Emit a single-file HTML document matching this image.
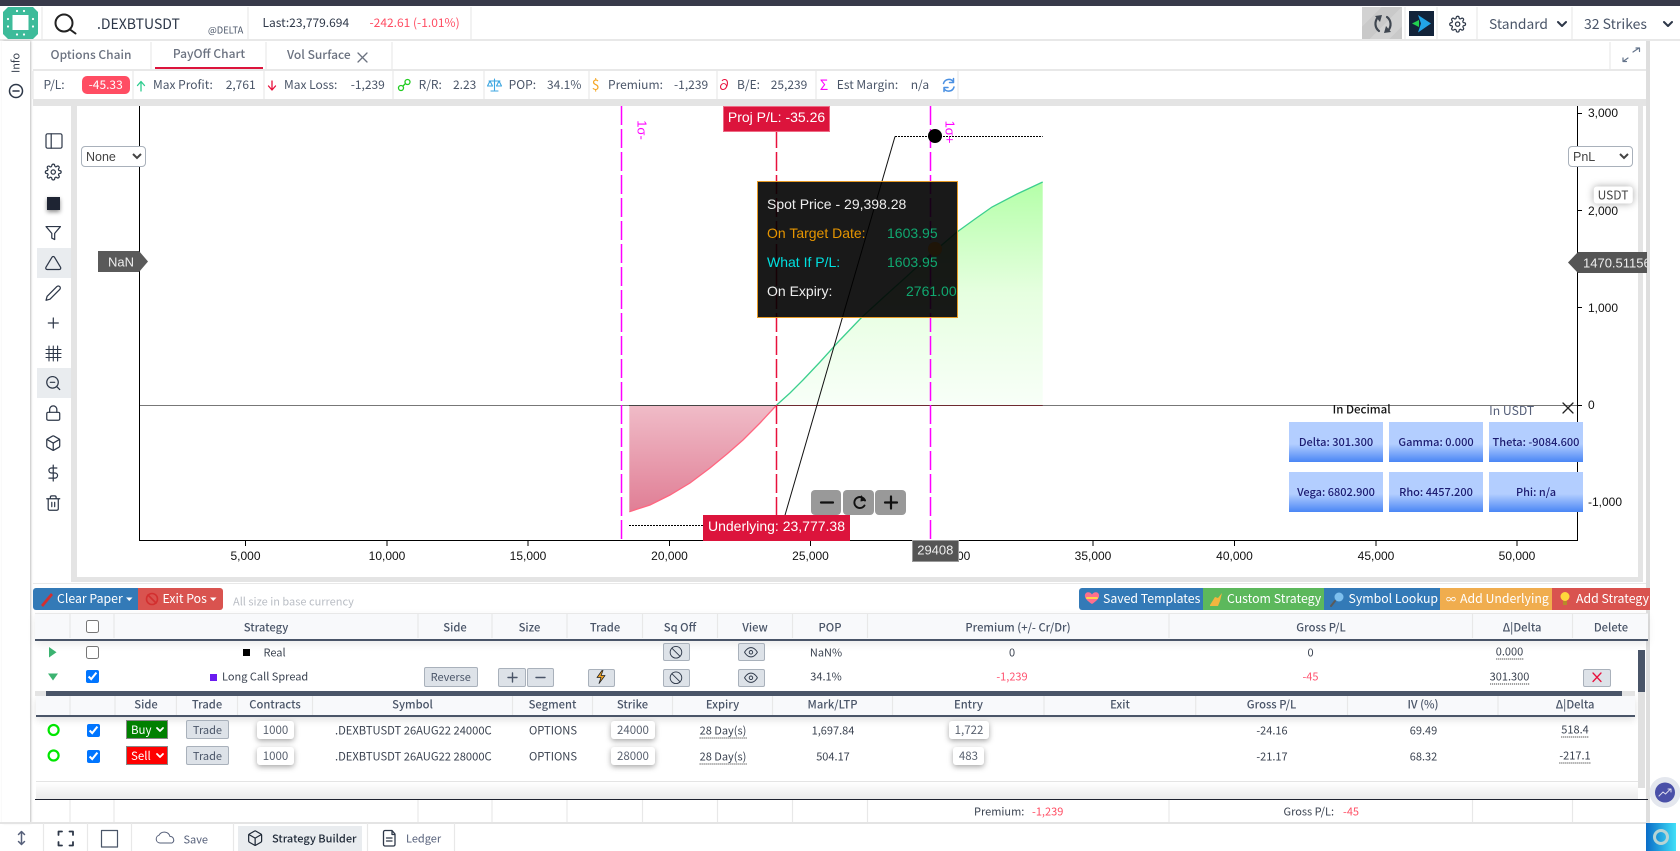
<!DOCTYPE html>
<html lang="en"><head><meta charset="utf-8"><title>PayOff Chart</title>
<style>
html,body{margin:0;padding:0;width:1680px;height:851px;overflow:hidden;background:#fff}
body{position:relative;font-family:"Noto Sans CJK JP","Liberation Sans",sans-serif;font-size:11px;color:#3a4250}
.a{position:absolute}
.x,.c{position:absolute;white-space:nowrap;line-height:1}
.x{transform:translateY(-50%)}
.c{transform:translate(-50%,-50%)}
.lib{font-family:"Liberation Sans",sans-serif}
svg.full{position:absolute;left:0;top:0;width:1680px;height:851px;pointer-events:none}
.th{font-weight:500;color:#4a5568;font-size:11.2px}
.st{font-size:12px;color:#4a5568}
.btn{position:absolute;background:#dde2e8;border:1px solid #a9b1bb;border-radius:2px;box-sizing:border-box;color:#4a5568}
.inp{position:absolute;background:#fff;border-radius:3px;box-shadow:0 2px 6px rgba(0,0,0,.35);text-align:center;color:#5a6270;font-size:11.5px;line-height:18px}
.dot{border-bottom:1px dotted #222;line-height:14px!important}
.gr{position:absolute;width:94px;height:40px;background:linear-gradient(#b3ceff 0%,#b3ceff 55%,#4a86f5 100%);color:#1c1c72;font-size:11px;font-weight:500;text-align:center;line-height:40px;white-space:nowrap}
select.sel{position:absolute;background:#fff;border:1px solid #a9b1bb;border-radius:4px;font:12.5px "Liberation Sans",sans-serif;color:#444;padding:0;margin:0}
.bs{position:absolute;left:126px;width:42px;height:19px;box-sizing:border-box;border:1px solid #888;color:#fff;font-size:11.5px;line-height:18px;padding-left:4px}
input[type=checkbox]{position:absolute;margin:0;width:13px;height:13px}
</style></head><body>

<!-- page backgrounds -->
<div class="a" style="left:0;top:0;width:1680px;height:6px;background:#383a4a"></div>
<div class="a" style="left:0;top:39px;width:1680px;height:2px;background:#e8e8e8"></div>
<div class="a" style="left:2px;top:41px;width:28px;height:782px;background:#fff;box-shadow:1px 0 2px rgba(0,0,0,.25)"></div>
<div class="a" style="left:1646px;top:41px;width:4px;height:781px;background:#dedede"></div>
<div class="a" style="left:33px;top:69px;width:1613px;height:2px;background:#e8e8e8"></div>
<div class="a" style="left:33px;top:99px;width:1613px;height:7px;background:#e4e4e4"></div>
<div class="a" style="left:71px;top:106px;width:6px;height:476px;background:#e4e4e4"></div>
<div class="a" style="left:1638px;top:106px;width:5px;height:476px;background:#e4e4e4"></div>
<div class="a" style="left:71px;top:577px;width:1572px;height:5px;background:#e4e4e4"></div>
<div class="a" style="left:33px;top:583px;width:1613px;height:1px;background:#e8e8e8"></div>
<div class="a" style="left:1362px;top:7px;width:40px;height:32px;background:repeating-linear-gradient(135deg,#d2d2d2 0 14px,#c9c9c9 14px 28px)"></div>
<div class="a" style="left:37px;top:248px;width:34px;height:30px;background:#e9ecef"></div>
<div class="a" style="left:37px;top:368px;width:34px;height:30px;background:#e9ecef"></div>
<div class="a" style="left:155px;top:67px;width:108px;height:2px;background:#dc143c"></div>
<!-- table header backgrounds -->
<div class="a" style="left:35px;top:613px;width:1613px;height:25px;background:#f8f9fb;border-top:1px solid #e8e8e8;border-bottom:2px solid #4a5568;box-shadow:0 3px 8px rgba(0,0,0,.08)"></div>
<div class="a" style="left:36px;top:696px;width:1599px;height:19px;background:#f8f9fb;border-bottom:2px solid #4a5568;box-shadow:0 3px 8px rgba(0,0,0,.12)"></div>
<div class="a" style="left:35px;top:691px;width:1600px;height:5px;background:#e4e4e4"></div>
<div class="a" style="left:46px;top:691px;width:1576px;height:5px;background:#4a5568"></div>
<div class="a" style="left:36px;top:781px;width:1602px;height:18px;background:linear-gradient(#fff,#eaeaea);border-top:1px solid #e4e4e4"></div>
<div class="a" style="left:35px;top:799px;width:1613px;height:1px;background:#1f2330"></div>
<div class="a" style="left:0;top:822px;width:1650px;height:1.5px;background:#e4e4e4"></div>
<div class="a" style="left:1638px;top:650px;width:7px;height:138px;background:#e0e0e0"></div>
<div class="a" style="left:1638px;top:650px;width:7px;height:42px;background:#4a5568"></div>
<div class="a" style="left:238px;top:826px;width:124px;height:25px;background:#e9ecef"></div>
<div class="a" style="left:1646px;top:823px;width:30px;height:28px;background:linear-gradient(90deg,#0a6cc8,#40e0f8)"></div>

<!-- chart + grid lines -->
<svg class="full" viewBox="0 0 1680 851">
<defs>
<linearGradient id="gg" gradientUnits="userSpaceOnUse" x1="0" y1="182" x2="0" y2="405"><stop offset="0" stop-color="#b4ffa8"/><stop offset=".5" stop-color="#e6ffe0"/><stop offset="1" stop-color="#f8fff8"/></linearGradient>
<linearGradient id="rg" gradientUnits="userSpaceOnUse" x1="0" y1="405" x2="0" y2="512"><stop offset="0" stop-color="#f0bcc8"/><stop offset="1" stop-color="#e07e95"/></linearGradient>
</defs>
<!-- cell dividers -->
<g stroke="#e8e8e8" stroke-width="1.2">
<path d="M42 7V39M248 7V39M471 7V39M1405 7V39M1437 7V39M1477 7V39M1572 7V39"/>
<path d="M151 42V69M266 42V69M392 42V69M1610 42V69"/>
<path d="M33 71V99M133 71V99M264 71V99M393 71V99M484 71V99M589 71V99M717 71V99M816 71V99M958 71V99"/>
<path d="M70 613V638M114 613V638M418 613V638M492 613V638M567 613V638M642.5 613V638M717.5 613V638M792.5 613V638M867.5 613V638M1169 613V638M1472.5 613V638M1572.5 613V638"/>
<path d="M70 696V715M115 696V715M176.4 696V715M237.5 696V715M312.5 696V715M512.5 696V715M592.5 696V715M672.5 696V715M772.5 696V715M892.5 696V715M1044 696V715M1195.7 696V715M1347.5 696V715M1498 696V715"/>
<path d="M70 800V822M114 800V822M418 800V822M492 800V822M567 800V822M642.5 800V822M717.5 800V822M792.5 800V822M867.5 800V822M1169 800V822M1472.5 800V822M1572.5 800V822"/>
<path d="M43.5 823V851M87.5 823V851M131.5 823V851M233.5 823V851M367.5 823V851M454.5 823V851"/>
</g>
<!-- areas -->
<path d="M776.7 405L790 393 803 380 820 362 840 340 862 317 885 296 905 278 930 255 957 232 975 219 992 207 1017 194 1042.7 182V405Z" fill="url(#gg)"/>
<path d="M629.3 511.7L650 505 670 495 690 483 710 468 727 454 743 440 760 423 776.7 405H629.3Z" fill="url(#rg)"/>
<path d="M776.7 405L790 393 803 380 820 362 840 340 862 317 885 296 905 278 930 255 957 232 975 219 992 207 1017 194 1042.7 182" fill="none" stroke="#3ccf8e" stroke-width="1.3"/>
<path d="M629.3 511.7L650 505 670 495 690 483 710 468 727 454 743 440 760 423 776.7 405" fill="none" stroke="#ff6680" stroke-width="1.3"/>
<!-- zero line -->
<path d="M139.5 405.5H1577.5" stroke="#777" fill="none"/>
<path d="M629 405.5H776.7" stroke="#444" fill="none"/>
<path d="M776.7 405.5H1042.7" stroke="#6e2a30" fill="none"/>
<!-- sigma + spot lines -->
<path d="M621.5 106V540M930.5 106V540" stroke="#f0f" stroke-width="1.5" stroke-dasharray="19 4" fill="none"/>
<path d="M776.5 106V540" stroke="#e8103c" stroke-width="1.5" stroke-dasharray="19 4" fill="none"/>
<!-- expiry line -->
<path d="M629 525.5H782" stroke="#000" stroke-dasharray="2 1" fill="none"/>
<path d="M782 525.5L895 136.5" stroke="#111" fill="none"/>
<path d="M895 136.5H1042.7" stroke="#000" stroke-dasharray="2 1" fill="none"/>
<circle cx="935" cy="136" r="7" fill="#000"/>
<!-- axes -->
<path d="M139.5 106V540.5H1577.5V106" stroke="#000" fill="none"/>
<path d="M245.5 540V546M387 540V546M528 540V546M669.5 540V546M810.5 540V546M952 540V546M1093 540V546M1234.5 540V546M1376 540V546M1517 540V546" stroke="#000" fill="none"/>
<path d="M1577 113.5h5M1577 210.5h5M1577 307.5h5M1577 405.5h5M1577 501.5h5" stroke="#000" fill="none"/>
<!-- arrow tags -->
<polygon points="98,251 139,251 148,261.5 139,272 98,272" fill="#5a5a5a"/>
<polygon points="1568,262.5 1578,252 1647,252 1647,273 1578,273" fill="#555"/>
</svg>

<!-- header text -->
<div class="x" style="left:97px;top:24px;font-size:14px;color:#2d3748">.DEXBTUSDT</div>
<div class="x" style="left:208px;top:29.5px;font-size:9.3px;color:#4a5568">@DELTA</div>
<div class="x" style="left:262.5px;top:23px;font-size:12px;color:#2d3748">Last:23,779.694</div>
<div class="x" style="left:369.5px;top:23px;font-size:12px;color:#ff4d63">-242.61 (-1.01%)</div>
<div class="x" style="left:1489px;top:24px;font-size:13.8px;color:#4a5568">Standard</div>
<div class="x" style="left:1584px;top:24px;font-size:14px;color:#4a5568">32 Strikes</div>

<!-- side info -->
<div class="c" style="left:16px;top:63px;font-size:11px;transform:translate(-50%,-50%) rotate(-90deg)">Info</div>

<!-- tabs -->
<div class="c" style="left:91px;top:54.5px;font-size:12px;font-weight:500;color:#6b7280">Options Chain</div>
<div class="c" style="left:209px;top:53.5px;font-size:12px;font-weight:500;color:#6b7280">PayOff Chart</div>
<div class="x" style="left:287px;top:54.5px;font-size:12px;font-weight:500;color:#6b7280">Vol Surface</div>

<!-- stats -->
<div class="st">
<div class="x" style="left:43.5px;top:85px">P/L:</div>
<div class="a" style="left:81.5px;top:76px;width:48.5px;height:18px;background:#ff4d63;border-radius:5px"></div>
<div class="c" style="left:105.7px;top:85px;color:#fff">-45.33</div>
<div class="x" style="left:153px;top:85px">Max Profit:</div><div class="x" style="left:225.7px;top:85px">2,761</div>
<div class="x" style="left:284px;top:85px">Max Loss:</div><div class="x" style="left:350.7px;top:85px">-1,239</div>
<div class="x" style="left:418.6px;top:85px">R/R:</div><div class="x" style="left:453px;top:85px">2.23</div>
<div class="x" style="left:508.6px;top:85px">POP:</div><div class="x" style="left:547px;top:85px">34.1%</div>
<div class="c" style="left:595.7px;top:85px;color:#f5a623;font-size:14px">$</div>
<div class="x" style="left:608px;top:85px">Premium:</div><div class="x" style="left:674px;top:85px">-1,239</div>
<div class="c" style="left:724px;top:85px;color:#e8103c;font-size:14px">∂</div>
<div class="x" style="left:737px;top:85px">B/E:</div><div class="x" style="left:770.7px;top:85px">25,239</div>
<div class="c" style="left:824px;top:85px;color:#f0f;font-size:14px">Σ</div>
<div class="x" style="left:836.8px;top:85px">Est Margin:</div><div class="x" style="left:910.7px;top:85px">n/a</div>
</div>

<!-- chart overlays -->
<select class="sel" style="left:81px;top:146px;width:65px;height:21px"><option>None</option></select>
<select class="sel" style="left:1568px;top:146px;width:64.5px;height:21px"><option>PnL</option></select>
<div class="c lib" style="left:121px;top:261.5px;color:#eee;font-size:13px">NaN</div>
<div class="x lib" style="left:1583px;top:262.5px;width:64px;overflow:hidden;color:#eee;font-size:13px">1470.51156</div>
<div class="c" style="left:1613px;top:194.5px;width:38.5px;height:17px;line-height:17px;text-align:center;background:#fff;border-radius:3px;box-shadow:0 0 8px rgba(0,0,0,.35);font-size:12px;color:#444">USDT</div>
<div class="c lib" style="left:642px;top:130px;color:#f0f;font-size:13px;transform:translate(-50%,-50%) rotate(90deg)">1σ-</div>
<div class="c lib" style="left:950px;top:132px;color:#f0f;font-size:13px;transform:translate(-50%,-50%) rotate(90deg)">1σ+</div>

<!-- axis labels -->
<div class="lib" style="font-size:12px;color:#111">
<div class="c" style="left:245.5px;top:555.5px">5,000</div>
<div class="c" style="left:387px;top:555.5px">10,000</div>
<div class="c" style="left:528px;top:555.5px">15,000</div>
<div class="c" style="left:669.5px;top:555.5px">20,000</div>
<div class="c" style="left:810.5px;top:555.5px">25,000</div>
<div class="c" style="left:952px;top:555.5px">30,000</div>
<div class="c" style="left:1093px;top:555.5px">35,000</div>
<div class="c" style="left:1234.5px;top:555.5px">40,000</div>
<div class="c" style="left:1376px;top:555.5px">45,000</div>
<div class="c" style="left:1517px;top:555.5px">50,000</div>
<div class="x" style="left:1588px;top:113px">3,000</div>
<div class="x" style="left:1588px;top:210.5px">2,000</div>
<div class="x" style="left:1588px;top:307.5px">1,000</div>
<div class="x" style="left:1588px;top:404.5px">0</div>
<div class="x" style="left:1588px;top:501.5px">-1,000</div>
</div>

<div class="a" style="left:723px;top:106px;width:105px;height:24px;background:#dc143c;border:1px solid #ee6a85"></div>
<div class="c lib" style="left:776.5px;top:117px;color:#fff;font-size:14px">Proj P/L: -35.26</div>

<div class="a" style="left:757px;top:181px;width:199px;height:135px;border:1.5px solid #e69a25;background:rgba(0,0,0,.9)"></div>
<div class="lib" style="font-size:14px">
<div class="x" style="left:767px;top:203.5px;color:#eee">Spot Price - 29,398.28</div>
<div class="x" style="left:767px;top:232.5px;color:#e69500">On Target Date:</div>
<div class="x" style="left:887px;top:232.5px;color:#10a870">1603.95</div>
<div class="x" style="left:767px;top:261.5px;color:#00e0e0">What If P/L:</div>
<div class="x" style="left:887px;top:261.5px;color:#10a870">1603.95</div>
<div class="x" style="left:767px;top:290.5px;color:#eee">On Expiry:</div>
<div class="x" style="left:906px;top:290.5px;color:#10a870">2761.00</div>
</div>

<div class="a" style="left:703px;top:515px;width:147px;height:25.5px;background:#dc143c"></div>
<div class="c lib" style="left:776.5px;top:525.5px;color:#fff;font-size:14px">Underlying: 23,777.38</div>
<div class="a" style="left:811.3px;top:490px;width:30px;height:25px;background:#999;border-radius:4px"></div>
<div class="a" style="left:843.3px;top:490px;width:30.5px;height:25px;background:#999;border-radius:4px"></div>
<div class="a" style="left:875.3px;top:490px;width:30.5px;height:25px;background:#999;border-radius:4px"></div>

<div class="a" style="left:912px;top:540px;width:46.5px;height:21.5px;background:#555;box-shadow:inset 0 0 0 1px #999"></div>
<div class="c lib" style="left:935.3px;top:550px;color:#eee;font-size:13px">29408</div>

<!-- greeks -->
<div class="c" style="left:1361.7px;top:410px;font-size:11.5px;font-weight:500;color:#111">In Decimal</div>
<div class="c" style="left:1511.7px;top:409.5px;font-size:12.2px;color:#56607a">In USDT</div>
<div class="gr" style="left:1289px;top:422px">Delta: 301.300</div>
<div class="gr" style="left:1389px;top:422px">Gamma: 0.000</div>
<div class="gr" style="left:1489px;top:422px">Theta: -9084.600</div>
<div class="gr" style="left:1289px;top:472px">Vega: 6802.900</div>
<div class="gr" style="left:1389px;top:472px">Rho: 4457.200</div>
<div class="gr" style="left:1489px;top:472px">Phi: n/a</div>

<!-- action buttons -->
<div class="a" style="left:33px;top:588px;width:105px;height:22px;background:#337ab7;border-radius:3px 0 0 3px"></div>
<div class="a" style="left:138px;top:588px;width:84.5px;height:22px;background:#d9534f;border-radius:0 3px 3px 0"></div>
<div class="a" style="left:1079px;top:588px;width:124px;height:22px;background:#337ab7;border-radius:3px 0 0 3px"></div>
<div class="a" style="left:1203px;top:588px;width:121px;height:22px;background:#5cb85c"></div>
<div class="a" style="left:1324px;top:588px;width:116px;height:22px;background:#337ab7"></div>
<div class="a" style="left:1440px;top:588px;width:112px;height:22px;background:#f0ad4e"></div>
<div class="a" style="left:1552px;top:588px;width:98px;height:22px;background:#d9534f"></div>
<div style="color:#fff;font-size:12.3px">
<div class="x" style="left:57px;top:597.5px">Clear Paper</div>
<div class="x" style="left:162.5px;top:597.5px">Exit Pos</div>
<div class="x" style="left:1103px;top:597.5px">Saved Templates</div>
<div class="x" style="left:1227px;top:597.5px">Custom Strategy</div>
<div class="x" style="left:1348.5px;top:597.5px">Symbol Lookup</div>
<div class="x" style="left:1446px;top:599px;font-size:10px">∞</div>
<div class="x" style="left:1460px;top:597.5px">Add Underlying</div>
<div class="x" style="left:1576px;top:597.5px">Add Strategy</div>
</div>
<div class="x" style="left:233px;top:602px;color:#b9bdc4;font-size:11px">All size in base currency</div>

<!-- main table header -->
<div class="th">
<div class="c" style="left:266px;top:628px">Strategy</div>
<div class="c" style="left:455px;top:628px">Side</div>
<div class="c" style="left:529.5px;top:628px">Size</div>
<div class="c" style="left:605px;top:628px">Trade</div>
<div class="c" style="left:680px;top:628px">Sq Off</div>
<div class="c" style="left:755px;top:628px">View</div>
<div class="c" style="left:830px;top:628px">POP</div>
<div class="c" style="left:1018px;top:628px">Premium (+/- Cr/Dr)</div>
<div class="c" style="left:1321px;top:628px">Gross P/L</div>
<div class="c" style="left:1522px;top:628px">Δ|Delta</div>
<div class="c" style="left:1611px;top:628px">Delete</div>
</div>
<input type="checkbox" style="left:86px;top:620px">
<input type="checkbox" style="left:86px;top:645.5px">
<input type="checkbox" checked style="left:86px;top:670px">

<!-- strategy rows -->
<div class="a" style="left:243px;top:648.5px;width:7px;height:7px;background:#000"></div>
<div class="x" style="left:263.5px;top:653px">Real</div>
<div class="a" style="left:210px;top:674px;width:7px;height:7px;background:#6a1bf0"></div>
<div class="x" style="left:222px;top:677px">Long Call Spread</div>
<div class="btn" style="left:424px;top:667px;width:53.5px;height:20px;text-align:center;line-height:18px">Reverse</div>
<div class="btn" style="left:498px;top:668px;width:28px;height:18.5px"></div>
<div class="btn" style="left:527px;top:668px;width:27px;height:18.5px"></div>
<div class="btn" style="left:587.5px;top:668.5px;width:27px;height:18px"></div>
<div class="btn" style="left:662.5px;top:643px;width:27px;height:18px"></div>
<div class="btn" style="left:662.5px;top:668.5px;width:27px;height:18px"></div>
<div class="btn" style="left:737.5px;top:643px;width:27px;height:18px"></div>
<div class="btn" style="left:737.5px;top:668.5px;width:27px;height:18px"></div>
<div class="btn" style="left:1583px;top:668.5px;width:28px;height:18px"></div>
<div class="c" style="left:826px;top:653px">NaN%</div>
<div class="c" style="left:826px;top:677px">34.1%</div>
<div class="c" style="left:1012px;top:653px">0</div>
<div class="c" style="left:1012px;top:677px;color:#ff5370">-1,239</div>
<div class="c" style="left:1310.5px;top:653px">0</div>
<div class="c" style="left:1310.5px;top:677px;color:#ff5370">-45</div>
<div class="c dot" style="left:1509.5px;top:652px">0.000</div>
<div class="c dot" style="left:1509.5px;top:677px">301.300</div>

<!-- sub header -->
<div class="th">
<div class="c" style="left:146px;top:705px">Side</div>
<div class="c" style="left:207px;top:705px">Trade</div>
<div class="c" style="left:275px;top:705px">Contracts</div>
<div class="c" style="left:412.5px;top:705px">Symbol</div>
<div class="c" style="left:552.5px;top:705px">Segment</div>
<div class="c" style="left:632.5px;top:705px">Strike</div>
<div class="c" style="left:722.5px;top:705px">Expiry</div>
<div class="c" style="left:832.5px;top:705px">Mark/LTP</div>
<div class="c" style="left:968.5px;top:705px">Entry</div>
<div class="c" style="left:1120px;top:705px">Exit</div>
<div class="c" style="left:1271.5px;top:705px">Gross P/L</div>
<div class="c" style="left:1423px;top:705px">IV (%)</div>
<div class="c" style="left:1575px;top:705px">Δ|Delta</div>
</div>

<!-- leg rows -->
<input type="checkbox" checked style="left:87px;top:723.5px">
<input type="checkbox" checked style="left:87px;top:749.5px">
<div class="bs" style="top:720px;background:#008000">Buy</div>
<div class="bs" style="top:746px;background:#f00">Sell</div>
<div class="btn" style="left:186.4px;top:720px;width:42.2px;height:19px;text-align:center;line-height:18px">Trade</div>
<div class="btn" style="left:186.4px;top:746px;width:42.2px;height:19px;text-align:center;line-height:18px">Trade</div>
<div class="inp" style="left:257px;top:721px;width:37px;height:18px">1000</div>
<div class="inp" style="left:257px;top:747px;width:37px;height:18px">1000</div>
<div class="x" style="left:335px;top:731px;font-size:11.2px">.DEXBTUSDT 26AUG22 24000C</div>
<div class="x" style="left:335px;top:757px;font-size:11.2px">.DEXBTUSDT 26AUG22 28000C</div>
<div class="c" style="left:553px;top:731px;font-size:11.2px">OPTIONS</div>
<div class="c" style="left:553px;top:757px;font-size:11.2px">OPTIONS</div>
<div class="inp" style="left:611px;top:721px;width:44px;height:18px">24000</div>
<div class="inp" style="left:611px;top:747px;width:44px;height:18px">28000</div>
<div class="c dot" style="left:723px;top:731px">28 Day(s)</div>
<div class="c dot" style="left:723px;top:757px">28 Day(s)</div>
<div class="c" style="left:833px;top:731px">1,697.84</div>
<div class="c" style="left:833px;top:757px">504.17</div>
<div class="inp" style="left:949px;top:721px;width:40px;height:18px">1,722</div>
<div class="inp" style="left:953px;top:747px;width:31px;height:18px">483</div>
<div class="c" style="left:1272px;top:731px">-24.16</div>
<div class="c" style="left:1272px;top:757px">-21.17</div>
<div class="c" style="left:1423.5px;top:731px">69.49</div>
<div class="c" style="left:1423.5px;top:757px">68.32</div>
<div class="c dot" style="left:1575px;top:730px">518.4</div>
<div class="c dot" style="left:1575px;top:756px">-217.1</div>

<!-- footer -->
<div class="x" style="left:974px;top:812px">Premium:</div>
<div class="x" style="left:1032px;top:812px;color:#ff4d63">-1,239</div>
<div class="x" style="left:1283.5px;top:812px">Gross P/L:</div>
<div class="x" style="left:1343px;top:812px;color:#ff4d63">-45</div>
<div class="x" style="left:183.5px;top:840px;color:#56607a">Save</div>
<div class="x" style="left:272px;top:839px;color:#1f2937;font-weight:500">Strategy Builder</div>
<div class="x" style="left:406px;top:839px;color:#56607a">Ledger</div>

<!-- icons -->
<svg class="full" viewBox="0 0 1680 851" fill="none" stroke-linecap="round" stroke-linejoin="round">
<defs>
<g id="gear" stroke-width="1.7"><circle cx="12" cy="12" r="3"/><path d="M19.4 15a1.65 1.65 0 0 0 .33 1.82l.06.06a2 2 0 0 1 0 2.83 2 2 0 0 1-2.83 0l-.06-.06a1.65 1.65 0 0 0-1.82-.33 1.65 1.65 0 0 0-1 1.51V21a2 2 0 0 1-2 2 2 2 0 0 1-2-2v-.09A1.65 1.65 0 0 0 9 19.4a1.65 1.65 0 0 0-1.82.33l-.06.06a2 2 0 0 1-2.83 0 2 2 0 0 1 0-2.83l.06-.06a1.65 1.65 0 0 0 .33-1.82 1.65 1.65 0 0 0-1.51-1H3a2 2 0 0 1-2-2 2 2 0 0 1 2-2h.09A1.65 1.65 0 0 0 4.6 9a1.65 1.65 0 0 0-.33-1.82l-.06-.06a2 2 0 0 1 0-2.83 2 2 0 0 1 2.83 0l.06.06a1.65 1.65 0 0 0 1.82.33H9a1.65 1.65 0 0 0 1-1.51V3a2 2 0 0 1 2-2 2 2 0 0 1 2 2v.09a1.65 1.65 0 0 0 1 1.51 1.65 1.65 0 0 0 1.82-.33l.06-.06a2 2 0 0 1 2.83 0 2 2 0 0 1 0 2.83l-.06.06a1.65 1.65 0 0 0-.33 1.82V9a1.65 1.65 0 0 0 1.51 1H21a2 2 0 0 1 2 2 2 2 0 0 1-2 2h-.09a1.65 1.65 0 0 0-1.51 1z"/></g>
<g id="cube" stroke-width="1.7"><path d="M21 16V8a2 2 0 0 0-1-1.73l-7-4a2 2 0 0 0-2 0l-7 4A2 2 0 0 0 3 8v8a2 2 0 0 0 1 1.73l7 4a2 2 0 0 0 2 0l7-4A2 2 0 0 0 21 16z"/><path d="M3.27 6.96L12 12.01l8.73-5.05M12 22.08V12"/></g>
<g id="ban" stroke="#2d3748" stroke-width="1.6"><circle cx="12" cy="12" r="10"/><path d="M5 5L19 19"/></g>
<g id="eye" stroke="#2d3748" stroke-width="1.6"><path d="M1 12s4-8 11-8 11 8 11 8-4 8-11 8-11-8-11-8z"/><circle cx="12" cy="12" r="3"/></g>
</defs>

<!-- dimmed marker inside tooltip -->
<circle cx="935" cy="249" r="7" fill="#1f1508"/>

<!-- logo -->
<rect x="3" y="7" width="35" height="32" rx="4" fill="#3dbb9a"/>
<rect x="12.5" y="15" width="16" height="15" fill="#fff"/>
<path d="M3 7h5l-5 5zM38 7h-5l5 5zM3 39h5l-5-5zM38 39h-5l5-5z" fill="#fff"/>
<g fill="#fff"><circle cx="17" cy="11" r="1.1"/><circle cx="24" cy="11" r="1.1"/><circle cx="17" cy="34.5" r="1.1"/><circle cx="24" cy="34.5" r="1.1"/><circle cx="8" cy="19" r="1.1"/><circle cx="8" cy="26.5" r="1.1"/><circle cx="33" cy="19" r="1.1"/><circle cx="33" cy="26.5" r="1.1"/></g>
<!-- search -->
<circle cx="64" cy="23" r="8.5" stroke="#222" stroke-width="2"/><path d="M70 29.5L75.5 33.5" stroke="#222" stroke-width="2"/>
<!-- refresh -->
<g stroke="#3f4650" stroke-width="2.2"><path d="M1378 17C1374 22 1375 28 1379 31"/><path d="M1388 31C1392 26 1391 20 1387 17"/></g>
<path d="M1375 16l7-1-2 7zM1391 32l-7 1 2-7z" fill="#3f4650"/>
<!-- tile -->
<rect x="1409" y="11" width="25" height="25" fill="#12233a"/>
<polygon points="1418,15 1431,23.5 1418,32.5 1421,23.5" fill="#22a5e8"/>
<polygon points="1412,23.5 1419,20 1419,27" fill="#22d050"/>
<use href="#gear" transform="translate(1449,15.5) scale(.72)" stroke="#2d3748"/>
<g stroke="#2d3748" stroke-width="2"><path d="M1558 22l4 4 4-4M1664 22l4 4 4-4"/></g>
<!-- info circle -->
<circle cx="16" cy="91" r="6.5" stroke="#2d3748" stroke-width="1.5"/><path d="M13 91h6" stroke="#2d3748" stroke-width="1.5"/>
<!-- tab close + expand -->
<path d="M358 53l9 9M367 53l-9 9" stroke="#6b7280" stroke-width="1.3"/>
<g stroke="#64748b" stroke-width="1.2"><path d="M1633 52l6-4M1636 48h3.5v3.5M1628 58l-5 3.5M1623 58v3.5h3.5"/></g>
<!-- stats icons -->
<path d="M141 91V82M137.5 85.5L141 81.5l3.5 4" stroke="#2ecc8f" stroke-width="1.3"/>
<path d="M272 81v8.5M268.5 86l3.5 4 3.5-4" stroke="#e8103c" stroke-width="1.3"/>
<g stroke="#22cc22" stroke-width="1.3"><circle cx="401" cy="88" r="2.5"/><circle cx="407.5" cy="82" r="2.5"/><path d="M403 86l2.5-2.5"/></g>
<g stroke="#3ba5e0" stroke-width="1.1"><path d="M494.5 79v11M489 81h11M490 81l-2.5 5h5zM499 81l-2.5 5h5zM491 91h7"/></g>
<g stroke="#4a90e2" stroke-width="1.5"><path d="M943.5 83.5a5.5 5.5 0 0 1 10-1.5M954 87a5.5 5.5 0 0 1-10 1.5M953.5 78.5V82.5H949.5M944 91.5V87.5H948"/></g>

<!-- toolbar -->
<g stroke="#2d3748">
<g transform="translate(44.4,131.4) scale(.8)" stroke-width="1.5"><rect x="2" y="3" width="20" height="18" rx="2"/><path d="M8.5 3v18"/></g>
<use href="#gear" transform="translate(44.6,163.4) scale(.72)"/>
<g transform="translate(44.6,224.4) scale(.72)" stroke-width="1.7"><polygon points="22 3 2 3 10 12.46 10 19 14 21 14 12.46"/></g>
<g transform="translate(44.6,254.4) scale(.72)" stroke-width="1.7"><path d="M10.29 3.86L1.82 18a2 2 0 0 0 1.71 3h16.94a2 2 0 0 0 1.71-3L13.71 3.86a2 2 0 0 0-3.42 0z"/></g>
<g transform="translate(44.6,284.4) scale(.72)" stroke-width="1.7"><path d="M17 3a2.828 2.828 0 1 1 4 4L7.5 20.5 2 22l1.5-5.5L17 3z"/></g>
<path d="M53.3 318v10M48.3 323h10" stroke-width="1.2"/>
<path d="M49 346V361M53.3 346V361M57.6 346V361M46 349.5H61M46 353.5H61M46 357.5H61" stroke-width="1.1"/>
<g transform="translate(44.6,374.4) scale(.72)" stroke-width="1.7"><circle cx="11" cy="11" r="8"/><path d="M21 21l-4.35-4.35M8 11h6"/></g>
<g transform="translate(44.6,404.4) scale(.72)" stroke-width="1.7"><rect x="3" y="11" width="18" height="11" rx="2"/><path d="M7 11V7a5 5 0 0 1 10 0v4"/></g>
<use href="#cube" transform="translate(44.6,434.4) scale(.72)"/>
<g transform="translate(44.6,464.4) scale(.72)" stroke-width="1.7"><path d="M12 1v22M17 5H9.5a3.5 3.5 0 0 0 0 7h5a3.5 3.5 0 0 1 0 7H6"/></g>
<g transform="translate(44.6,494.4) scale(.72)" stroke-width="1.7"><path d="M3 6h18M19 6v14a2 2 0 0 1-2 2H7a2 2 0 0 1-2-2V6m3 0V4a2 2 0 0 1 2-2h4a2 2 0 0 1 2 2v2M10 11v6M14 11v6"/></g>
</g>
<rect x="47" y="197" width="13" height="13" fill="#1e2433" style="filter:drop-shadow(0 2px 2px rgba(0,0,0,.45))"/>

<!-- chart zoom buttons -->
<path d="M821 502.5h12M885 502.5h12M891 496.5v12" stroke="#111" stroke-width="2.2"/>
<path d="M865 500.5a5.5 5.5 0 1 0-.5 5" stroke="#111" stroke-width="1.9"/><path d="M861 495l5 5.500-5.500 1z" fill="#111"/>
<!-- greeks close -->
<path d="M1563 403l10 10M1573 403l-10 10" stroke="#222" stroke-width="1.3"/>

<!-- action button icons -->
<path d="M41 605l10-12 2 2-10 12z" fill="#d32f2f"/><circle cx="152" cy="599" r="5.5" stroke="#d32f2f" stroke-width="1.6"/><path d="M148 595l8 8" stroke="#d32f2f" stroke-width="1.6"/>
<path d="M126 597.5h6.5l-3.25 3.5zM210 597.5h6.5l-3.25 3.5z" fill="#fff"/>
<path d="M1092 604c-8-5-8-9-6-11 2-1.5 5-.5 6 1.5 1-2 4-3 6-1.5 2 2 2 6-6 11z" fill="#ff6f8d"/><path d="M1087 598h10" stroke="#ffd24a" stroke-width="2"/>
<path d="M1210 605l5-8 3 1 4-5-2 8-2 5h-8z" fill="#f3b63f"/>
<circle cx="1339" cy="597" r="4.5" fill="#7ec0ee"/><path d="M1335 601l-4 5" stroke="#5a5a5a" stroke-width="2"/>
<circle cx="1565" cy="596.5" r="4.5" fill="#ffd83b"/><rect x="1563" y="601" width="4" height="4" fill="#b78a2a"/>

<!-- table icons -->
<polygon points="49,647 49,657.5 56.5,652.3" fill="#3cb371"/>
<polygon points="48,673.5 58,673.5 53,680.5" fill="#3cb371"/>
<path d="M508 677.5h9M512.5 673v9M536 677.5h9" stroke="#4a5568" stroke-width="1.4"/>
<path d="M602 670.5l-5 7h4l-2 6 6-8h-4l2-5z" fill="#f5a623" stroke="#222" stroke-width=".8"/>
<use href="#ban" transform="translate(669,645.3) scale(.58)"/>
<use href="#ban" transform="translate(669,670.8) scale(.58)"/>
<use href="#eye" transform="translate(744,645.3) scale(.58)"/>
<use href="#eye" transform="translate(744,670.8) scale(.58)"/>
<path d="M1593 673l8 8.5M1601 673l-8 8.5" stroke="#e8103c" stroke-width="1.3"/>
<circle cx="53.6" cy="730" r="5" stroke="#00e600" stroke-width="2.2"/>
<circle cx="53.6" cy="755.5" r="5" stroke="#00e600" stroke-width="2.2"/>
<path d="M157 728l3 3 3-3M157 754l3 3 3-3" stroke="#fff" stroke-width="1.8"/>

<!-- bottom nav icons -->
<g stroke="#56607a" stroke-width="1.5">
<path d="M21.5 832v12M18.5 834.5l3-3 3 3M18.5 841.5l3 3 3-3"/>
<path d="M58.5 835v-3.5h3.5M69.5 831.5h3.5v3.5M73 842v3.5h-3.5M62 845.5h-3.5v-3.5" stroke="#2d3748" stroke-width="1.8"/>
<rect x="101.5" y="830.5" width="16" height="16.5" stroke="#4a5568" stroke-width="1.2"/>
<path d="M172 843h-12a4 4 0 0 1-1-7.8 6 6 0 0 1 11 1.300 3.500 3.500 0 0 1 2 6.500z" stroke-width="1"/>
</g>
<use href="#cube" transform="translate(246.5,829.5) scale(.72)" stroke="#1f2937"/>
<g stroke="#2d3748" stroke-width="1.3"><path d="M392 830.5h-7a1.500 1.500 0 0 0-1.500 1.500v12.500a1.500 1.500 0 0 0 1.500 1.500h8.500a1.500 1.500 0 0 0 1.500-1.500V834zM392 830.5V834.5h3M386.500 838h5.500M386.500 841h5.500"/></g>
<!-- floating + help -->
<circle cx="1665" cy="792.5" r="15.5" fill="#e4e7ee"/><circle cx="1665" cy="792.5" r="10" fill="#4a50a8"/>
<path d="M1659 796l4-4 2.500 2 5-5M1668 789h3v3" stroke="#dde" stroke-width="1"/>
<circle cx="1661" cy="837" r="6.5" stroke="#b8d4d4" stroke-width="3"/>
</svg>
</body></html>
